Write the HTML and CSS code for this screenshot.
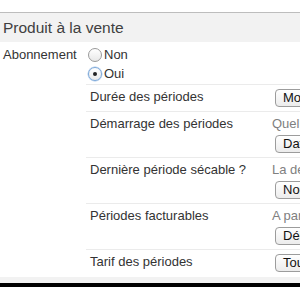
FILE: index.html
```html
<!DOCTYPE html>
<html lang="fr">
<head>
<meta charset="utf-8">
<title>Produit à la vente</title>
<link rel="stylesheet" href="styles.css">
</head>
<body>
<div class="page">
  <div class="section-head">Produit à la vente</div>
  <div class="field">
    <div class="field-label">Abonnement</div>
    <div class="field-body">
      <label class="radio"><span class="radio-dot"></span>Non</label>
      <label class="radio"><span class="radio-dot checked"></span>Oui</label>
      <div class="sub">
        <div class="sub-row">
          <div class="sub-label">Durée des périodes</div>
          <div class="sub-value"><span class="btn">Mois</span></div>
        </div>
        <div class="sub-row">
          <div class="sub-label">Démarrage des périodes</div>
          <div class="sub-value">
            <div class="hint">Quelle est la date de démarrage ?</div>
            <span class="btn">Date de la commande</span>
          </div>
        </div>
        <div class="sub-row">
          <div class="sub-label">Dernière période sécable ?</div>
          <div class="sub-value">
            <div class="hint">La dernière période peut être partielle</div>
            <span class="btn">Non</span>
          </div>
        </div>
        <div class="sub-row">
          <div class="sub-label">Périodes facturables</div>
          <div class="sub-value">
            <div class="hint">A partir de quand facturer ?</div>
            <span class="btn">Début de période</span>
          </div>
        </div>
        <div class="sub-row">
          <div class="sub-label">Tarif des périodes</div>
          <div class="sub-value"><span class="btn">Tout le tarif</span></div>
        </div>
      </div>
    </div>
  </div>
  <div class="footer-band"></div>
  <div class="footer-bar"></div>
</div>
</body>
</html>
```

FILE: styles.css
```css
html, body {
  margin: 0;
  padding: 0;
  background: #ffffff;
}

body {
  font-family: "Liberation Sans", Arial, sans-serif;
  font-size: 13px;
  color: #333333;
  overflow: hidden;
}

.page {
  width: 300px;
  padding-top: 12px;
  overflow: hidden;
}

.section-head {
  border-top: 1px solid #bdbdbd;
  background: #f2f2f2;
  height: 30px;
  box-sizing: border-box;
  padding: 5px 0 0 3px;
  font-size: 15.5px;
  line-height: 20px;
  color: #404040;
  white-space: nowrap;
}

.field {
  display: grid;
  grid-template-columns: 86px 1fr;
  padding-top: 3px;
}

.field-label {
  padding-left: 3px;
  line-height: 18px;
  padding-top: 1px;
  white-space: nowrap;
}

.field-body {
  min-width: 0;
}

.radio {
  display: flex;
  align-items: center;
  height: 19px;
  padding-left: 2px;
  white-space: nowrap;
}

.radio-dot {
  width: 12px;
  height: 12px;
  border-radius: 50%;
  border: 1px solid #9a9a9a;
  background: linear-gradient(#ffffff, #e8e8e8);
  margin-right: 2px;
  position: relative;
  flex: none;
}

.radio-dot.checked {
  border-color: #7aa7d8;
  box-shadow: 0 0 0 0.5px #a9c6ea;
  background: linear-gradient(#ffffff, #eaeaea);
}

.radio-dot.checked::after {
  content: "";
  position: absolute;
  left: 4px;
  top: 4px;
  width: 4px;
  height: 4px;
  border-radius: 50%;
  background: #222222;
}

.sub {
  margin-top: 1px;
}

.sub-row {
  display: grid;
  grid-template-columns: 186px 1fr;
  border-top: 1px solid #ebebeb;
  padding: 4px 0;
}

.sub-label {
  padding-left: 4px;
  line-height: 16px;
  white-space: nowrap;
}

.sub-value {
  white-space: nowrap;
  min-width: 0;
}

.hint {
  line-height: 16px;
  color: #808080;
  margin-bottom: 3px;
}

.btn {
  display: inline-block;
  box-sizing: border-box;
  height: 18px;
  line-height: 16px;
  margin-left: 3px;
  padding: 0 7px;
  border: 1px solid #9c9c9c;
  border-radius: 4px;
  background: linear-gradient(#ffffff, #ececec);
  color: #111111;
  vertical-align: top;
}

.footer-band {
  height: 6px;
  margin-top: 1px;
  background: #f2f2f2;
}

.footer-bar {
  height: 4px;
  background: #000000;
}
```
